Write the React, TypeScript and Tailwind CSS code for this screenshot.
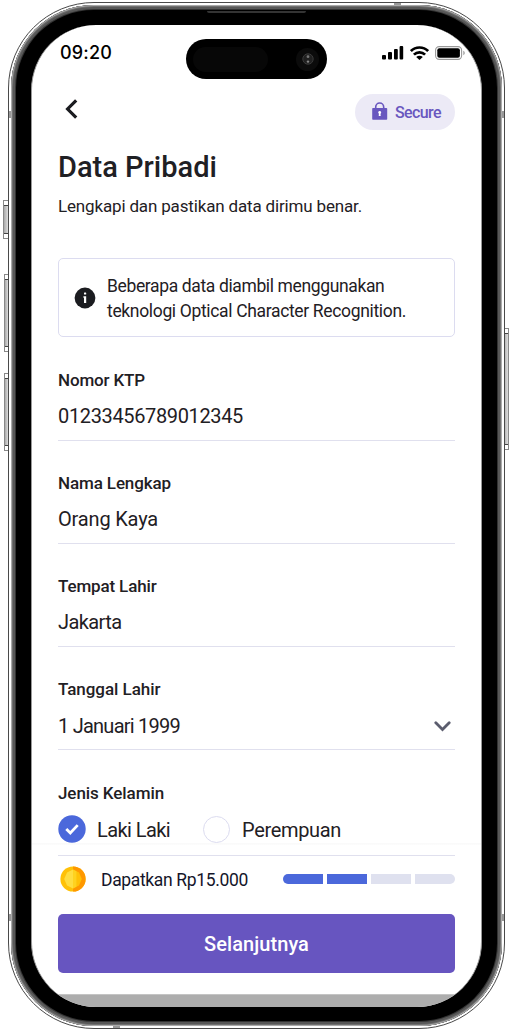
import type { ReactNode } from 'react';

function SignalIcon() {
  return (
    <svg width="22" height="14" viewBox="0 0 22 14" fill="#000">
      <rect x="0" y="9" width="4" height="4.6" rx="1" />
      <rect x="6" y="6" width="4" height="7.6" rx="1" />
      <rect x="12" y="3" width="3.8" height="10.6" rx="1" />
      <rect x="17.6" y="0" width="3.6" height="13.6" rx="1" />
    </svg>
  );
}

function WifiIcon() {
  return (
    <svg width="19" height="14" viewBox="0 0 19 14" fill="none" stroke="#000" strokeWidth="2.7">
      <path d="M.9 5.1C5.6.3 13.4.3 18.1 5.1" />
      <path d="M3.9 8.6c3.2-3.1 8-3.1 11.2 0" />
      <path d="M6.2 11c1.8-1.6 4.8-1.6 6.6 0L9.5 14Z" fill="#000" stroke="none" />
    </svg>
  );
}

function BatteryIcon() {
  return (
    <svg width="31" height="14" viewBox="0 0 31 14">
      <rect x=".6" y=".6" width="26" height="12.8" rx="3.6" fill="none" stroke="#999" strokeWidth="1.1" />
      <rect x="2.3" y="2.3" width="22.6" height="9.4" rx="2" fill="#000" />
      <path d="M28.2 4.8c2.2.7 2.2 3.7 0 4.4Z" fill="#aaa" />
    </svg>
  );
}

function LockIcon() {
  return (
    <svg width="16" height="18" viewBox="0 0 16 18">
      <path d="M3.7 7V5.2C3.7 2.8 5.4 1 7.7 1s4 1.8 4 4.2V7" fill="none" stroke="#6957bf" strokeWidth="1.6" />
      <rect x=".2" y="6" width="15" height="11.8" rx=".8" fill="#6957bf" />
      <circle cx="7.7" cy="10.5" r="1.4" fill="#fff" />
      <path d="M7 11h1.4l.3 3H6.7Z" fill="#fff" />
    </svg>
  );
}

function InfoIcon() {
  return (
    <svg width="22" height="22" viewBox="0 0 22 22">
      <circle cx="11" cy="11" r="10.4" fill="#1b1c20" />
      <rect x="10" y="5.5" width="2.2" height="2.1" rx=".4" fill="#fff" />
      <path d="M9.4 9.3h2.8v6.6H10v-5.2h-.6Z" fill="#fff" />
    </svg>
  );
}

function CoinIcon() {
  return (
    <svg width="26" height="26" viewBox="0 0 26 26">
      <circle cx="13" cy="13" r="12.6" fill="#ffc107" />
      <path d="M13 .4a12.6 12.6 0 0 1 0 25.2Z" fill="#ff9800" />
      <path d="M13 3.6 7 6.4 4.2 13 7 19.6l6 2.8Z" fill="#ffdd40" />
      <path d="M13 3.6l6 2.8 2.8 6.6-2.8 6.6-6 2.8Z" fill="#ffc107" />
      <path d="M13 3.6l3.4 1.6v15.6L13 22.4Z" fill="#ffd21f" />
    </svg>
  );
}

function Field({ label, value, icon }: { label: ReactNode; value: ReactNode; icon?: ReactNode }) {
  return (
    <div className="flex h-[103.1px] shrink-0 flex-col">
      <div className="h-6 text-[17px] font-medium leading-6">{label}</div>
      <div className="mt-2 flex h-[40.5px] items-center justify-between border-b border-[#e0e0ee] pb-[7px] text-[20px] leading-8">
        {value}
        {icon}
      </div>
    </div>
  );
}

function Antenna({ className }: { className: string }) {
  return <i className={`absolute bg-[#999] ${className}`} />;
}

function SideButton({ className }: { className: string }) {
  return (
    <i className={`absolute flex flex-col justify-between border border-[#888] bg-linear-to-r from-[#aaa] to-[#ddd] ${className}`}>
      <b className="h-[5px] border-b border-[#444] bg-white" />
      <b className="h-[5px] border-t border-[#444] bg-white" />
    </i>
  );
}

export default function App() {
  return (
    <div className="relative h-[1030px] w-[512px] overflow-hidden bg-white pl-2 pt-0.5 font-['Roboto',sans-serif] text-[#1f2024]">
      <SideButton className="left-[3px] top-[200px] h-[39px] w-[6px]" />
      <SideButton className="left-[4px] top-[274px] h-[78px] w-[5px]" />
      <SideButton className="left-[4px] top-[373px] h-[78px] w-[5px]" />
      <SideButton className="left-[503px] top-[328px] h-[122px] w-[6px]" />

      <div className="relative h-[1027px] w-[497px] rounded-[86px] border border-[#4a4a4a] bg-white p-0.5">
        <Antenna className="left-0 top-[108px] h-[7px] w-[3px]" />
        <Antenna className="right-0 top-[108px] h-[7px] w-[3px]" />
        <Antenna className="left-0 top-[911px] h-[7px] w-[3px]" />
        <Antenna className="right-0 top-[911px] h-[7px] w-[3px]" />
        <Antenna className="right-[103px] top-0 h-[3px] w-[7px]" />
        <Antenna className="bottom-0 left-[104px] h-[3px] w-[7px]" />

        <div className="relative h-full w-full rounded-[83px] bg-black px-5 pb-[19px] pt-5 shadow-[inset_0_0_0_1px_#aaa,inset_0_0_0_2px_#707070,inset_0_0_0_4px_#585858,inset_0_0_0_5px_#333]">
          <i className="absolute left-[196px] top-[6px] h-[2px] w-[99px] rounded-b-sm bg-[#343434]" />
          <div className="flex h-full w-full flex-col overflow-hidden rounded-[65px] border-x border-[#999] bg-white">
            <div className="flex h-[55px] shrink-0 pl-[28px] pr-[14px] pt-3.5">
              <span className="w-[126px] font-['Inter',sans-serif] text-[18px] font-medium leading-7 tracking-[0.2px] text-black">09:20</span>
              <div className="flex h-10 w-[141px] items-center justify-between rounded-full bg-black pl-[7px] pr-2">
                <i className="h-[25px] w-[75px] rounded-full bg-[#070707]" />
                <i className="flex size-[23px] items-center justify-center rounded-full bg-[#0b0b0b]">
                  <svg width="12" height="12" viewBox="0 0 12 12">
                    <circle cx="6" cy="6" r="5.2" fill="#202020" stroke="#3a3a3a" />
                    <circle cx="6" cy="3.7" r="1.4" fill="#777" />
                    <circle cx="6" cy="8.6" r="1.2" fill="#888" />
                  </svg>
                </i>
              </div>
              <div className="ml-[55px] mt-[7px] flex h-3.5 gap-[6px]">
                <SignalIcon />
                <WifiIcon />
                <BatteryIcon />
              </div>
            </div>

            <div className="flex min-h-0 flex-1 flex-col px-[26px]">
              <div className="mt-3.5 flex h-9 shrink-0 items-center justify-between">
                <svg className="-mt-1.5 ml-[7px]" width="14" height="20" viewBox="0 0 14 20" fill="none" stroke="#1b1c20" strokeWidth="3.2">
                  <path d="M11.2 1.3 2.6 10l8.6 8.7" />
                </svg>
                <div className="flex h-9 w-[100px] items-center rounded-full bg-[#eceaf6] pl-[17px] text-[16px] font-medium tracking-[-0.6px] text-[#6957bf]">
                  <span className="-mt-[3px]"><LockIcon /></span>
                  <span className="ml-[7px] mt-px">Secure</span>
                </div>
              </div>

              <h1 className="mt-[18px] h-[38px] shrink-0 text-[29px] font-medium leading-[38px]">Data Pribadi</h1>
              <p className="mt-2 h-6 shrink-0 whitespace-nowrap text-[17px] leading-6 tracking-[-0.16px]">Lengkapi dan pastikan data dirimu benar.</p>

              <div className="mt-10 flex h-[79px] shrink-0 items-center rounded-[5px] border border-[#dcdcf0] pl-[15px]">
                <InfoIcon />
                <p className="ml-[11px] mt-0.5 whitespace-nowrap text-[17.5px] leading-[25px] tracking-[-0.37px]">
                  Beberapa data diambil menggunakan
                  <br />
                  <span className="tracking-[-0.34px]">teknologi Optical Character Recognition.</span>
                </p>
              </div>

              <div className="mt-[31px] flex shrink-0 flex-col">
                <Field label={<span className="tracking-[-0.15px]">Nomor KTP</span>} value={<span className="tracking-[-0.36px]">01233456789012345</span>} />
                <Field label={<span className="tracking-[-0.12px]">Nama Lengkap</span>} value={<span className="tracking-[-0.17px]">Orang Kaya</span>} />
                <Field label={<span className="tracking-[-0.14px]">Tempat Lahir</span>} value={<span className="tracking-[-0.59px]">Jakarta</span>} />
                <Field
                  label={<span className="tracking-[-0.04px]">Tanggal Lahir</span>}
                  value={<span className="tracking-[-0.76px]">1 Januari 1999</span>}
                  icon={
                    <svg className="mr-1 mt-0.5" width="17" height="11" viewBox="0 0 17 11" fill="none" stroke="#5b5d6e" strokeWidth="2.8" strokeLinecap="round">
                      <path d="m1.8 1.8 6.7 6.8 6.7-6.8" />
                    </svg>
                  }
                />
              </div>

              <div className="mt-[0.6px] h-6 shrink-0 text-[17px] font-medium leading-6 tracking-[-0.08px]">Jenis Kelamin</div>
              <div className="mt-[10.5px] flex h-7 shrink-0 items-center text-[20px]">
                <svg width="28" height="28" viewBox="0 0 28 28">
                  <circle cx="14" cy="14" r="13.7" fill="#4b68db" />
                  <path d="m8.3 13.9 4 4 7.4-7.8" fill="none" stroke="#fff" strokeWidth="2.8" />
                </svg>
                <span className="ml-[11px] mt-px w-[106px] tracking-[-0.58px]">Laki Laki</span>
                <i className="size-[27px] rounded-full border border-[#dcdcf0]" />
                <span className="ml-3 mt-px tracking-[-0.33px]">Perempuan</span>
              </div>
              <div className="-mx-[26px] h-[11.5px] shrink-0 bg-linear-to-b from-[#fafafa] from-10% to-white to-20%" />
              <div className="h-px shrink-0 bg-[#e0e0ee]" />

              <div className="flex h-[47px] shrink-0 items-center pl-0.5">
                <CoinIcon />
                <span className="ml-[15px] mt-px w-[181.5px] text-[17.5px] tracking-[-0.35px] text-[#14152a]">Dapatkan Rp15.000</span>
                <div className="flex h-2.5 flex-1 gap-1 overflow-hidden rounded-full">
                  <i className="flex-1 bg-[#4b68db]" />
                  <i className="flex-1 bg-[#4b68db]" />
                  <i className="flex-1 bg-[#dfe1ef]" />
                  <i className="flex-1 bg-[#dfe1ef]" />
                </div>
              </div>

              <button className="mt-[11px] h-[59.5px] shrink-0 rounded-[5px] bg-[#6755c0] pt-px text-[20px] font-medium tracking-[0.07px] text-white">Selanjutnya</button>
            </div>
            <div className="h-[13px] shrink-0 border-t border-[#c4c4c4] bg-[#adadad]" />
          </div>
        </div>
      </div>
    </div>
  );
}
